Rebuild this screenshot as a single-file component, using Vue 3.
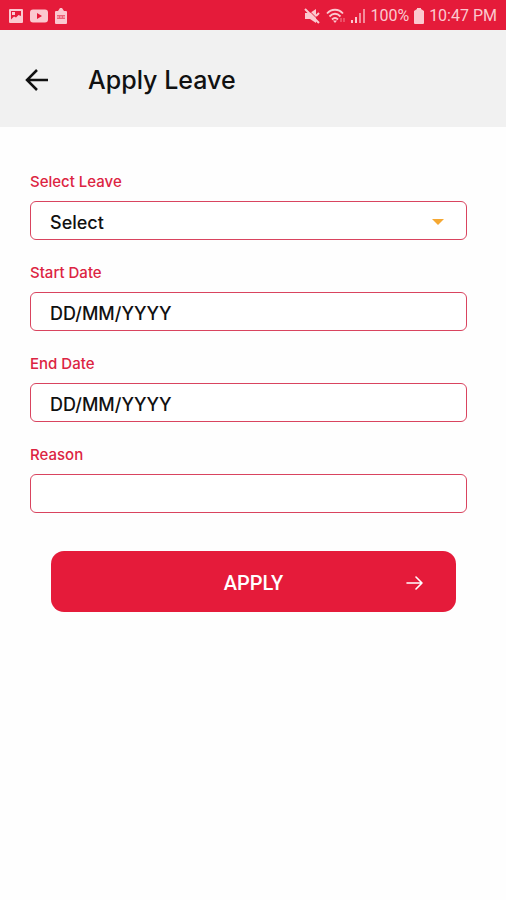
<script setup>
import { reactive } from 'vue'

const form = reactive({ leave: '', start: '', end: '', reason: '' })
const dates = [
  { key: 'start', label: 'Start Date' },
  { key: 'end', label: 'End Date' },
]
</script>

<template>
  <div class="screen">
    <div class="status">
      <div class="group">
        <svg width="16" height="16" viewBox="0 0 16 16">
          <path fill="currentColor" fill-rule="evenodd" d="M2 1h12a1 1 0 0 1 1 1v12a1 1 0 0 1-1 1H2a1 1 0 0 1-1-1V2a1 1 0 0 1 1-1zM3 3v8.500l3-3 2 1 2.500-2.500L13 8V3zM4 4h3v3H4z" />
        </svg>
        <svg width="18" height="14" viewBox="0 0 18 14">
          <path fill="currentColor" fill-rule="evenodd" d="M3 .5h12a3 3 0 0 1 3 3v7a3 3 0 0 1-3 3H3a3 3 0 0 1-3-3v-7a3 3 0 0 1 3-3zM7 4v6l5-3z" />
        </svg>
        <svg width="14" height="18" viewBox="0 0 14 18">
          <path fill="currentColor" d="M2 4h2l2-3h2l2 3h2a1 1 0 0 1 1 1v11a1 1 0 0 1-1 1H2a1 1 0 0 1-1-1V5a1 1 0 0 1 1-1z" />
          <path fill="#e51b3a" opacity=".3" d="M3 8h8v4H3z" />
          <path stroke="#e51b3a" stroke-width="1" opacity=".4" d="M3 8.500h8M3 11.500h8M5.500 8v4M8.500 8v4" />
        </svg>
      </div>
      <div class="group right">
        <svg class="mute" width="16" height="16" viewBox="0 0 16 16">
          <path fill="currentColor" d="M1 5h5l6-4v14l-6-4H1z" />
          <path stroke="#e51b3a" stroke-width="1" d="M3 .5 16 13.500" />
          <path stroke="currentColor" stroke-width="2" d="M1 1 15 15M12 8l3-3" />
        </svg>
        <svg width="20" height="16" viewBox="0 0 20 16" fill="none" stroke="currentColor" stroke-width="1.800">
          <path d="M1 5.500c4.500-5 11.500-5 16 0M3.500 8.500c3.500-3.500 7.500-3.500 11 0M6 11.500c2-2 4-2 6 0" />
          <path fill="currentColor" stroke="none" d="m9 15-2-2.500h4z" />
          <path stroke-width="1" opacity=".6" d="M15 10v4M18 10v4" />
        </svg>
        <svg width="16" height="16" viewBox="0 0 16 16" stroke="currentColor" stroke-width="2">
          <path d="M2 15v-3M6 15V9" />
          <path opacity=".65" d="M10 15V5M14 15V1" />
        </svg>
        <span>100%</span>
        <svg width="12" height="16" viewBox="0 0 12 16">
          <path fill="currentColor" d="M4 0h4v1l3 2v12a1 1 0 0 1-1 1H2a1 1 0 0 1-1-1V3l3-2z" />
        </svg>
        <span>10:47 PM</span>
      </div>
    </div>

    <header class="bar">
      <button class="back" type="button" aria-label="Back">
        <svg width="24" height="24" viewBox="0 0 24 24" fill="none" stroke="currentColor" stroke-width="2.500">
          <path d="M23 12H3M12 2 2 12l10 10" />
        </svg>
      </button>
      <h1>Apply Leave</h1>
    </header>

    <form class="form" @submit.prevent>
      <div class="field">
        <label for="leave">Select Leave</label>
        <div class="select">
          <select id="leave" v-model="form.leave" class="control">
            <option value="">Select</option>
          </select>
          <svg class="caret" width="12" height="6" viewBox="0 0 12 6">
            <path fill="#f5a833" d="M0 0h12L6 6z" />
          </svg>
        </div>
      </div>
      <div v-for="d in dates" :key="d.key" class="field">
        <label :for="d.key">{{ d.label }}</label>
        <input :id="d.key" v-model="form[d.key]" class="control" type="text" placeholder="DD/MM/YYYY" />
      </div>
      <div class="field">
        <label for="reason">Reason</label>
        <input id="reason" v-model="form.reason" class="control" type="text" />
      </div>
      <button class="apply" type="submit">
        <span>APPLY</span>
        <svg width="18" height="14" viewBox="0 0 18 14" fill="none" stroke="currentColor" stroke-width="1.600">
          <path d="M1 7h15M10 1l6 6-6 6" stroke-linecap="round" stroke-linejoin="round" />
        </svg>
      </button>
    </form>
  </div>
</template>

<style>
body {
  background: #fefefe;
}
</style>

<style scoped>
.screen {
  font-family: Inter, "Liberation Sans", sans-serif;
  color: #111;
}
.status {
  display: flex;
  justify-content: space-between;
  align-items: center;
  box-sizing: border-box;
  height: 30px;
  padding: 2px 9px 0 8px;
  background: #e51b3a;
  color: #fbc9d0;
  font: 16px/28px Roboto, sans-serif;
}
.group {
  display: flex;
  align-items: center;
  gap: 6px;
}
.right {
  gap: 4px;
}
.mute {
  margin-right: 2px;
}
.bar {
  display: flex;
  align-items: center;
  gap: 39px;
  height: 97px;
  padding: 3px 25px 0;
  box-sizing: border-box;
  background: #f1f1f1;
}
.back {
  display: flex;
  padding: 0;
  border: 0;
  background: none;
  color: #111;
}
h1 {
  margin: 0;
  font-size: 25px;
  line-height: 32px;
  font-weight: 500;
}
.form {
  display: flex;
  flex-direction: column;
  gap: 23px;
  padding: 45px 39px 0 30px;
}
.field {
  display: flex;
  flex-direction: column;
  gap: 9px;
}
label {
  font-size: 15px;
  line-height: 20px;
  font-weight: 500;
  color: #dc2442;
}
.control {
  display: block;
  width: 100%;
  height: 39px;
  box-sizing: border-box;
  padding: 4px 19px 0;
  border: 1px solid #d9445f;
  border-radius: 6px;
  background: #fff;
  color: #111;
  font: 500 18px/24px Inter, "Liberation Sans", sans-serif;
  appearance: none;
  outline: none;
}
.control::placeholder {
  color: #111;
  opacity: 1;
}
.select {
  position: relative;
}
.caret {
  position: absolute;
  right: 23px;
  top: 18px;
  pointer-events: none;
}
.apply {
  display: grid;
  grid-template-columns: 1fr auto 1fr;
  align-items: center;
  height: 61px;
  margin: 15px 11px 0 21px;
  padding: 2px 32px 0;
  border: 0;
  border-radius: 13px;
  background: #e51b3a;
  color: #fff;
  font: 500 20px/24px Roboto, sans-serif;
}
.apply span {
  grid-column: 2;
}
.apply svg {
  justify-self: end;
}
</style>
